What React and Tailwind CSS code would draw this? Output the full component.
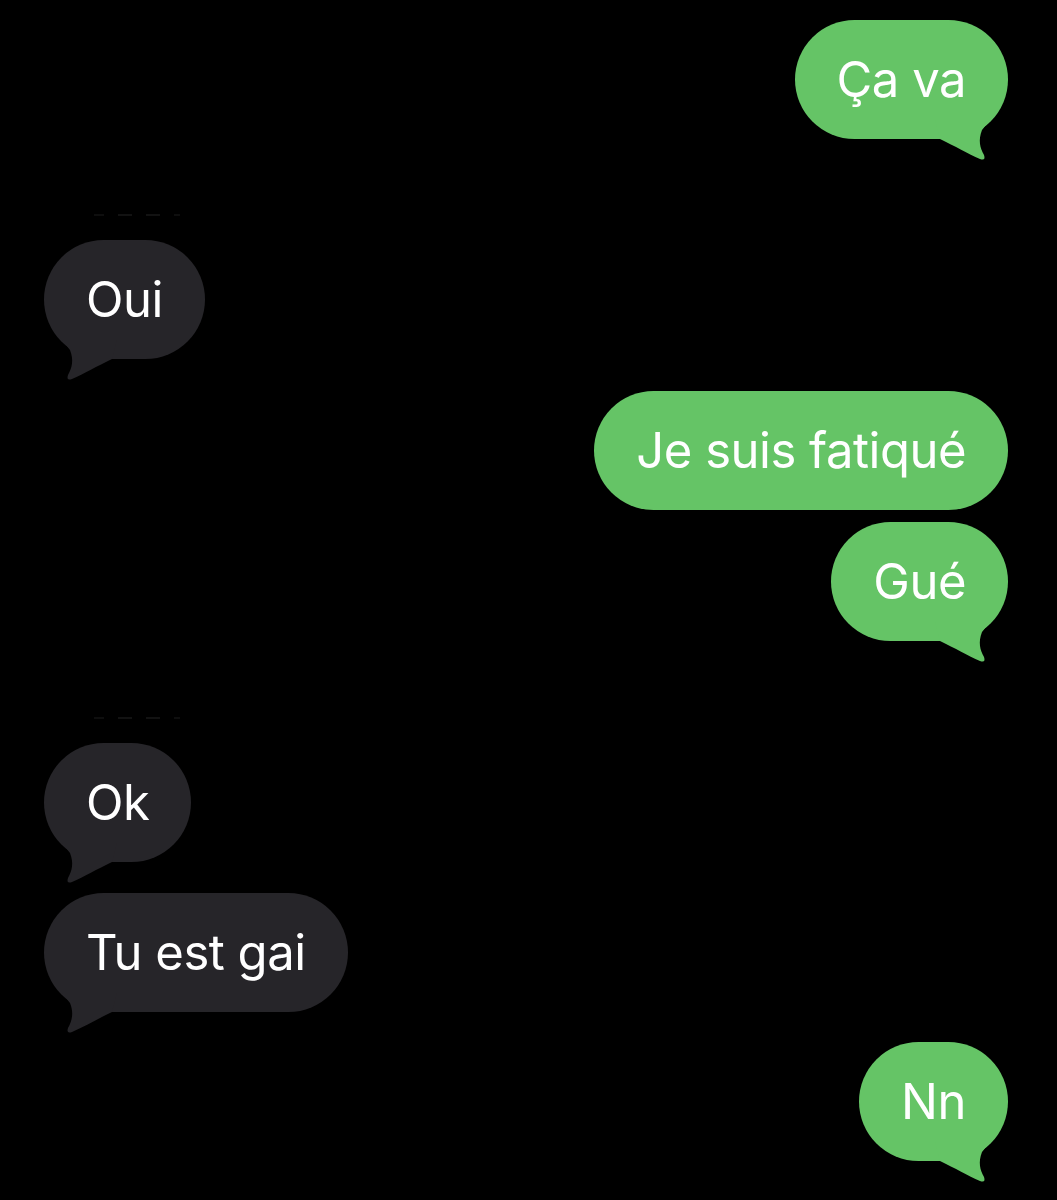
import React from "react";

const GREEN = "#65C466";
const GRAY = "#262529";

function Tail({ side, color }) {
  const path =
    "M -73 -19 L -68 0 C -53 7 -40 15 -28 20 Q -22 22 -24 16 C -28 9 -30 1 -26 -9 L -18 -19 Z";
  return (
    <svg
      className={
        side === "right"
          ? "absolute right-0 bottom-[-25px]"
          : "absolute left-0 bottom-[-25px] -scale-x-100"
      }
      width="80"
      height="50"
      viewBox="-80 -25 80 50"
    >
      <path d={path} fill={color} />
    </svg>
  );
}

function Bubble({ text, side, tail, className = "" }) {
  const color = side === "right" ? GREEN : GRAY;
  return (
    <div
      className={
        "flex " + (side === "right" ? "justify-end" : "justify-start") + " " + className
      }
    >
      <div
        className="relative h-[119px] rounded-[60px] px-[42px] flex items-center text-white text-[49px] tracking-[-0.01em] leading-none"
        style={{ backgroundColor: color }}
      >
        {tail && <Tail side={side} color={color} />}
        <span className="relative">{text}</span>
      </div>
    </div>
  );
}

function Dots({ className = "" }) {
  return (
    <div className={"flex gap-[14px] pl-[50px] h-[4px] items-center " + className}>
      <span className="w-[10px] h-[2px] bg-[#0e0e0e]" />
      <span className="w-[14px] h-[2px] bg-[#121212]" />
      <span className="w-[14px] h-[2px] bg-[#121212]" />
      <span className="w-[6px] h-[2px] bg-[#0e0e0e]" />
    </div>
  );
}

export default function App() {
  return (
    <div
      className="min-h-[1200px] w-full bg-black pt-[20px] pl-[44px] pr-[49px] flex flex-col"
      style={{ fontFamily: "Inter, 'Noto Sans', sans-serif" }}
    >
      <Bubble text="Ça va" side="right" tail />
      <Dots className="mt-[74px]" />
      <Bubble text="Oui" side="left" tail className="mt-[23px]" />
      <Bubble text="Je suis fatiqué" side="right" className="mt-[32px]" />
      <Bubble text="Gué" side="right" tail className="mt-[12px]" />
      <Dots className="mt-[75px]" />
      <Bubble text="Ok" side="left" tail className="mt-[23px]" />
      <Bubble text="Tu est gai" side="left" tail className="mt-[31px]" />
      <Bubble text="Nn" side="right" tail className="mt-[30px]" />
    </div>
  );
}
